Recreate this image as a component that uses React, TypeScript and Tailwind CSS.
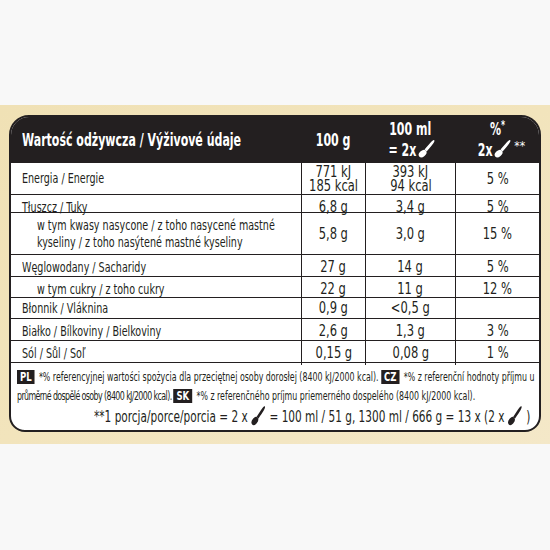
import React from 'react'

const FONT = { fontFamily: '"DejaVu Sans Condensed", "DejaVu Sans", sans-serif' }

function Spoon({ className = '' }: { className?: string }) {
  return (
    <svg viewBox="0 0 20 20" className={className} fill="currentColor">
      <path d="M17.2 1.2 C18.8 2.2 13 8.6 9.6 12.4 L7.6 10.6 C11 7 15.8 0.3 17.2 1.2Z" />
      <ellipse cx="5.6" cy="14.6" rx="4.4" ry="3" transform="rotate(-40 5.6 14.6)" />
    </svg>
  )
}

type Row = {
  label: string[]
  indent?: boolean
  a: string[]
  b: string[]
  c: string
  h: string
}

const ROWS: Row[] = [
  { label: ['Energia / Energie'], a: ['771 kJ', '185 kcal'], b: ['393 kJ', '94 kcal'], c: '5 %', h: 'h-[32px]' },
  { label: ['Tłuszcz / Tuky'], a: ['6,8 g'], b: ['3,4 g'], c: '5 %', h: 'h-[18px]' },
  {
    label: ['w tym kwasy nasycone / z toho nasycené mastné', 'kyseliny / z toho nasýtené mastné kyseliny'],
    indent: true,
    a: ['5,8 g'],
    b: ['3,0 g'],
    c: '15 %',
    h: 'h-[42px]'
  },
  { label: ['Węglowodany / Sacharidy'], a: ['27 g'], b: ['14 g'], c: '5 %', h: 'h-[22px]' },
  { label: ['w tym cukry / z toho cukry'], indent: true, a: ['22 g'], b: ['11 g'], c: '12 %', h: 'h-[21px]' },
  { label: ['Błonnik / Vláknina'], a: ['0,9 g'], b: ['<0,5 g'], c: '', h: 'h-[21px]' },
  { label: ['Białko / Bílkoviny / Bielkoviny'], a: ['2,6 g'], b: ['1,3 g'], c: '3 %', h: 'h-[22px]' },
  { label: ['Sól / Sůl / Soľ'], a: ['0,15 g'], b: ['0,08 g'], c: '1 %', h: 'h-[22px]' }
]

function Badge({ children }: { children: React.ReactNode }) {
  return (
    <span className="inline-block bg-[#231f20] text-white font-bold text-[13px] leading-[14px] px-[4px] mr-[6px] tracking-normal">
      {children}
    </span>
  )
}

// numbers are condensed a bit to mimic the label's narrow typeface
function Num({ children }: { children: React.ReactNode }) {
  return <span className="block whitespace-nowrap scale-x-[0.8]">{children}</span>
}

export default function App() {
  return (
    <div className="w-[550px] h-[550px] bg-[#f8f8f8] pt-[105px]" style={FONT}>
      <div className="h-[339px] bg-gradient-to-br from-[#f0e1b5] via-[#f2e4bc] to-[#f4e8c8] pt-[10px] px-[9px]">
        <div className="w-[532px] rounded-t-[20px] rounded-b-[16px] border-2 border-[#231f20] bg-white overflow-hidden text-[#231f20]">
          {/* header */}
          <div className="h-[45px] bg-[#231f20] text-white font-bold grid grid-cols-[290px_64px_90px_1fr] items-center">
            <div className="pl-[11px] text-[17px] whitespace-nowrap">
              <span className="inline-block scale-x-[0.72] origin-left pt-[2px]">Wartość odżywcza / Výživové údaje</span>
            </div>
            <div className="text-center text-[17px] pt-[2px]">
              <span className="inline-block scale-x-[0.72]">100 g</span>
            </div>
            <div className="flex flex-col items-center text-[17px] leading-[21px]">
              <span className="inline-block scale-x-[0.72] whitespace-nowrap">100 ml</span>
              <span className="flex items-center whitespace-nowrap">
                <span className="inline-block scale-x-[0.72] -mr-[4px]">= 2x</span>
                <Spoon className="w-[20px] h-[20px] -mt-[3px]" />
              </span>
            </div>
            <div className="flex flex-col items-center text-[17px] leading-[21px]">
              <span className="inline-block scale-x-[0.72] whitespace-nowrap">
                %<sup className="text-[12px]">*</sup>
              </span>
              <span className="flex items-center whitespace-nowrap pl-[6px]">
                <span className="inline-block scale-x-[0.72] -mr-[2px]">2x</span>
                <Spoon className="w-[20px] h-[20px] -mt-[3px]" />
                <span className="text-[12px] font-normal -mt-[8px] ml-[1px]">**</span>
              </span>
            </div>
          </div>

          {/* rows */}
          {ROWS.map((r, i) => (
            <div
              key={i}
              className={`grid grid-cols-[290px_64px_90px_1fr] border-t-[1.5px] border-[#231f20] ${r.h} text-[14px]`}
            >
              <div className={`flex flex-col justify-center leading-[17px] whitespace-nowrap ${r.indent ? 'pl-[26px]' : 'pl-[11px]'}`}>
                {r.label.map((l, j) => (
                  <span key={j} className="block scale-x-[0.76] origin-left">{l}</span>
                ))}
              </div>
              <div className="border-l-[1.5px] border-[#231f20] flex flex-col items-center justify-center leading-[14px] text-[16px]">
                {r.a.map((v, j) => <Num key={j}>{v}</Num>)}
              </div>
              <div className="border-l-[1.5px] border-[#231f20] flex flex-col items-center justify-center leading-[14px] text-[16px]">
                {r.b.map((v, j) => <Num key={j}>{v}</Num>)}
              </div>
              <div className="border-l-[1.5px] border-[#231f20] flex items-center justify-center text-[16px]">
                {r.c && <Num>{r.c}</Num>}
              </div>
            </div>
          ))}

          {/* footnotes */}
          <div className="border-t-[1.5px] border-[#231f20] h-[68px] px-[6px] pt-[4px]">
            <div className="text-[12px] leading-[20px] whitespace-nowrap">
              <span className="inline-block scale-x-[0.73] origin-left">
                <Badge>PL</Badge>
                *% referencyjnej wartości spożycia dla przeciętnej osoby dorosłej (8400 kJ/2000 kcal).{' '}
                <Badge>CZ</Badge>
                *% z referenční hodnoty příjmu u
              </span>
            </div>
            <div className="text-[12px] leading-[19px] whitespace-nowrap">
              <span className="inline-block scale-x-[0.73] origin-left">
                <span className="tracking-[-0.8px]">průměrné dospělé osoby (8400 kJ/2000 kcal). </span>
                <Badge>SK</Badge>
                *% z referenčného príjmu priemerného dospelého (8400 kJ/2000 kcal).
              </span>
            </div>
            <div className="flex justify-end text-[15px] leading-[23px] pr-[3px] whitespace-nowrap">
              <span className="inline-flex items-center scale-x-[0.78] origin-right">
                <span>**1 porcja/porce/porcia = 2 x</span>
                <Spoon className="w-[24px] h-[22px] mx-[2px] -mt-[4px]" />
                <span>= 100 ml / 51 g, 1300 ml / 666 g = 13 x (2 x</span>
                <Spoon className="w-[24px] h-[22px] mx-[2px] -mt-[4px]" />
                <span>)</span>
              </span>
            </div>
          </div>
        </div>
      </div>
    </div>
  )
}
